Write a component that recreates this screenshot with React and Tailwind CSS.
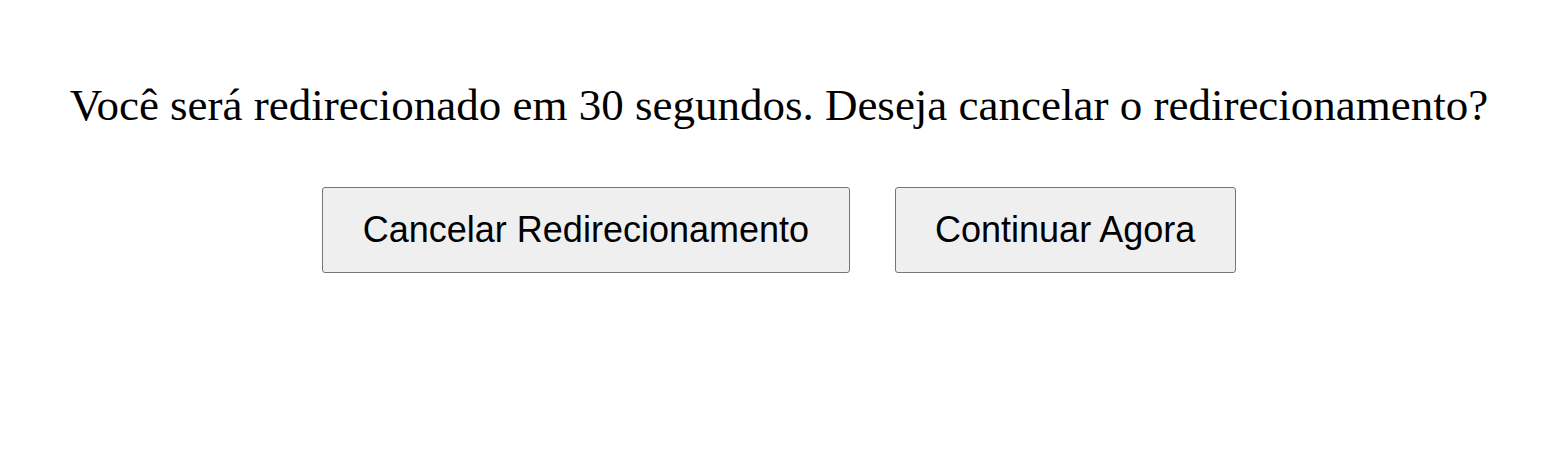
export default function App() {
  return (
    <div className="flex flex-col items-center pt-[79px] bg-white min-h-[450px]">
      <p className="font-['Liberation_Serif',serif] text-[45px] leading-[52px] text-black">
        Você será redirecionado em 30 segundos. Deseja cancelar o redirecionamento?
      </p>
      <div className="flex gap-[45px] mt-[56px]">
        <button className="font-['Liberation_Sans',Arial,sans-serif] text-[36px] leading-[41px] px-[39.5px] pt-[21px] pb-[22px] bg-[#efefef] border border-[#767676] rounded-[3px] text-black">
          Cancelar Redirecionamento
        </button>
        <button className="font-['Liberation_Sans',Arial,sans-serif] text-[36px] leading-[41px] px-[39.5px] pt-[21px] pb-[22px] bg-[#efefef] border border-[#767676] rounded-[3px] text-black">
          Continuar Agora
        </button>
      </div>
    </div>
  );
}
